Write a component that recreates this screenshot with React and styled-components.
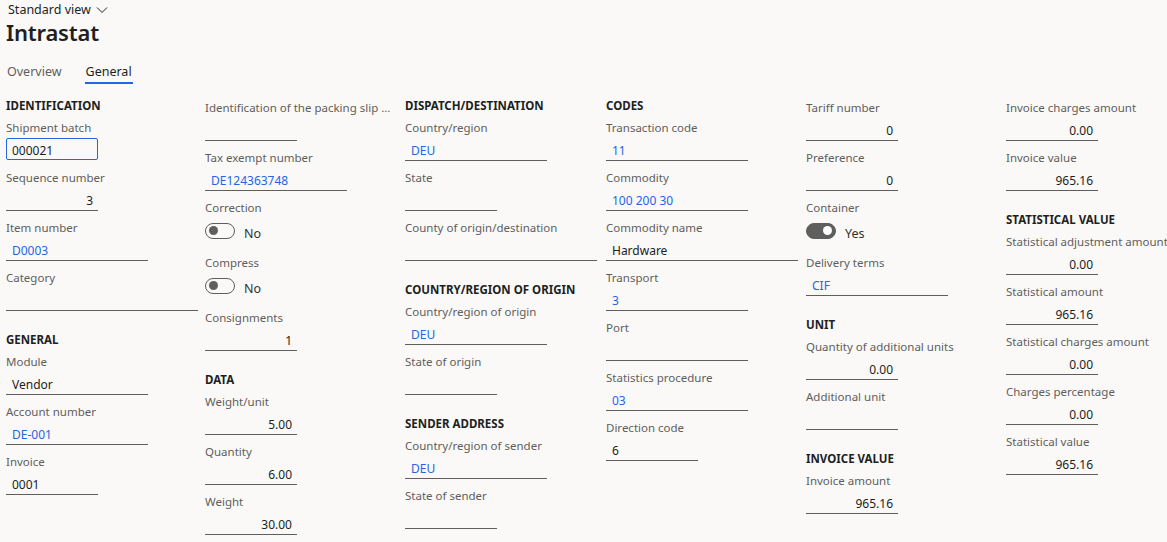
import React from 'react'
import styled, { createGlobalStyle } from 'styled-components'

const GlobalStyle = createGlobalStyle`
  html, body {
    margin: 0;
    padding: 0;
    background: #faf9f8;
    font-family: "Segoe UI", "Noto Sans", sans-serif;
    color: #201f1e;
  }
`

const Page = styled.div`
  width: 1167px;
  height: 542px;
  overflow: hidden;
  padding: 0 0 0 6px;
  box-sizing: border-box;
`

const ViewPicker = styled.div`
  display: flex;
  align-items: center;
  gap: 5px;
  height: 18px;
  padding: 1px 0 0 2px;
  margin-bottom: -1px;
  font-size: 12.5px;
  line-height: 18px;
  color: #201f1e;
`

const Title = styled.h1`
  margin: 0;
  font-size: 22px;
  font-weight: 600;
  line-height: 28px;
  letter-spacing: -0.2px;
  color: #201f1e;
`

const Tabs = styled.div`
  display: flex;
  gap: 22px;
  margin-top: 12px;
`

const Tab = styled.div`
  padding: 5px 1px 1px;
  font-size: 12.5px;
  line-height: 18px;
  color: ${p => (p.$active ? '#201f1e' : '#605e5c')};
  border-bottom: 2px solid ${p => (p.$active ? '#2266e3' : 'transparent')};
`

const Columns = styled.div`
  display: grid;
  grid-template-columns: 199px 200px 201px 200px 200px 1fr;
  margin-top: 11px;
`

const Column = styled.div`
  display: flex;
  flex-direction: column;
  min-width: 0;
`

const SectionHeading = styled.div`
  box-sizing: border-box;
  height: 20px;
  padding-top: 2px;
  line-height: 18px;
  margin-top: ${p => (p.$first ? '0' : '14px')};
  font-size: 11.5px;
  font-weight: 700;
  color: #201f1e;
  text-transform: uppercase;
  white-space: nowrap;
`

const Field = styled.div`
  padding: 4px 0;
`

const Label = styled.div`
  height: 18px;
  line-height: 18px;
  font-size: 11.5px;
  color: #605e5c;
  white-space: nowrap;
  ${p =>
    p.$clip &&
    `
    overflow: hidden;
    text-overflow: ellipsis;
    max-width: 190px;
  `}
`

const widths = { short: '92px', medium: '142px', wide: '192px' }

const Input = styled.div`
  box-sizing: border-box;
  width: ${p => widths[p.$size]};
  height: 24px;
  display: flex;
  align-items: center;
  justify-content: ${p => (p.$right ? 'flex-end' : 'flex-start')};
  padding: ${p => (p.$right ? '4px 5px 0 0' : '4px 0 0 6px')};
  font-size: 12px;
  color: ${p => (p.$link ? '#2266e3' : '#201f1e')};
  border-bottom: 1px solid #605e5c;
  ${p =>
    p.$focused &&
    `
    border: 1px solid #2266e3;
    border-radius: 2px;
    padding: 2px 0 0 5px;
    height: 22px;
    margin: 1px 0;
  `}
`

const ToggleRow = styled.div`
  display: flex;
  align-items: center;
  gap: 9px;
  height: 29px;
`

const Switch = styled.div`
  box-sizing: border-box;
  width: 30px;
  height: 16px;
  border-radius: 8px;
  display: flex;
  align-items: center;
  justify-content: ${p => (p.$on ? 'flex-end' : 'flex-start')};
  padding: 0 3px;
  border: 1px solid #605e5c;
  background: ${p => (p.$on ? '#5f5f5f' : 'transparent')};
  margin-top: -2px;
`

const Knob = styled.span`
  width: 9px;
  height: 9px;
  border-radius: 50%;
  background: ${p => (p.$on ? '#ffffff' : '#5f5f5f')};
`

const ToggleText = styled.span`
  font-size: 12.5px;
  color: #323130;
  margin-top: 3px;
`

const Chevron = () => (
  <svg width="12" height="8" viewBox="0 0 12 8">
    <path d="M1 1.5 L6 6.5 L11 1.5" fill="none" stroke="#201f1e" strokeWidth="1" />
  </svg>
)

const columns = [
  [
    { h: 'Identification' },
    { l: 'Shipment batch', v: '000021', s: 'short', focused: true },
    { l: 'Sequence number', v: '3', s: 'short', right: true },
    { l: 'Item number', v: 'D0003', s: 'medium', link: true },
    { l: 'Category', v: '', s: 'wide' },
    { h: 'General' },
    { l: 'Module', v: 'Vendor', s: 'medium' },
    { l: 'Account number', v: 'DE-001', s: 'medium', link: true },
    { l: 'Invoice', v: '0001', s: 'short' },
  ],
  [
    { l: 'Identification of the packing slip or invoice', v: '', s: 'short', clip: true },
    { l: 'Tax exempt number', v: 'DE124363748', s: 'medium', link: true },
    { l: 'Correction', toggle: false },
    { l: 'Compress', toggle: false },
    { l: 'Consignments', v: '1', s: 'short', right: true },
    { h: 'Data' },
    { l: 'Weight/unit', v: '5.00', s: 'short', right: true },
    { l: 'Quantity', v: '6.00', s: 'short', right: true },
    { l: 'Weight', v: '30.00', s: 'short', right: true },
  ],
  [
    { h: 'Dispatch/destination' },
    { l: 'Country/region', v: 'DEU', s: 'medium', link: true },
    { l: 'State', v: '', s: 'short' },
    { l: 'County of origin/destination', v: '', s: 'wide' },
    { h: 'Country/region of origin' },
    { l: 'Country/region of origin', v: 'DEU', s: 'medium', link: true },
    { l: 'State of origin', v: '', s: 'short' },
    { h: 'Sender address' },
    { l: 'Country/region of sender', v: 'DEU', s: 'medium', link: true },
    { l: 'State of sender', v: '', s: 'short' },
  ],
  [
    { h: 'Codes' },
    { l: 'Transaction code', v: '11', s: 'medium', link: true },
    { l: 'Commodity', v: '100 200 30', s: 'medium', link: true },
    { l: 'Commodity name', v: 'Hardware', s: 'wide' },
    { l: 'Transport', v: '3', s: 'medium', link: true },
    { l: 'Port', v: '', s: 'medium' },
    { l: 'Statistics procedure', v: '03', s: 'medium', link: true },
    { l: 'Direction code', v: '6', s: 'short' },
  ],
  [
    { l: 'Tariff number', v: '0', s: 'short', right: true },
    { l: 'Preference', v: '0', s: 'short', right: true },
    { l: 'Container', toggle: true },
    { l: 'Delivery terms', v: 'CIF', s: 'medium', link: true },
    { h: 'Unit' },
    { l: 'Quantity of additional units', v: '0.00', s: 'short', right: true },
    { l: 'Additional unit', v: '', s: 'short' },
    { h: 'Invoice value' },
    { l: 'Invoice amount', v: '965.16', s: 'short', right: true },
  ],
  [
    { l: 'Invoice charges amount', v: '0.00', s: 'short', right: true },
    { l: 'Invoice value', v: '965.16', s: 'short', right: true },
    { h: 'Statistical value' },
    { l: 'Statistical adjustment amount', v: '0.00', s: 'short', right: true },
    { l: 'Statistical amount', v: '965.16', s: 'short', right: true },
    { l: 'Statistical charges amount', v: '0.00', s: 'short', right: true },
    { l: 'Charges percentage', v: '0.00', s: 'short', right: true },
    { l: 'Statistical value', v: '965.16', s: 'short', right: true },
  ],
]

const Item = ({ item, first }) => {
  if (item.h) return <SectionHeading $first={first}>{item.h}</SectionHeading>
  if (item.toggle !== undefined)
    return (
      <Field>
        <Label>{item.l}</Label>
        <ToggleRow>
          <Switch $on={item.toggle}>
            <Knob $on={item.toggle} />
          </Switch>
          <ToggleText>{item.toggle ? 'Yes' : 'No'}</ToggleText>
        </ToggleRow>
      </Field>
    )
  return (
    <Field>
      <Label $clip={item.clip}>{item.l}</Label>
      <Input $size={item.s} $right={item.right} $link={item.link} $focused={item.focused}>
        {item.v}
      </Input>
    </Field>
  )
}

const App = () => {
  return (
    <Page>
      <GlobalStyle />
      <ViewPicker>
        Standard view <Chevron />
      </ViewPicker>
      <Title>Intrastat</Title>
      <Tabs>
        <Tab>Overview</Tab>
        <Tab $active>General</Tab>
      </Tabs>
      <Columns>
        {columns.map((col, i) => (
          <Column key={i}>
            {col.map((item, j) => (
              <Item key={j} item={item} first={j === 0} />
            ))}
          </Column>
        ))}
      </Columns>
    </Page>
  )
}

export default App
